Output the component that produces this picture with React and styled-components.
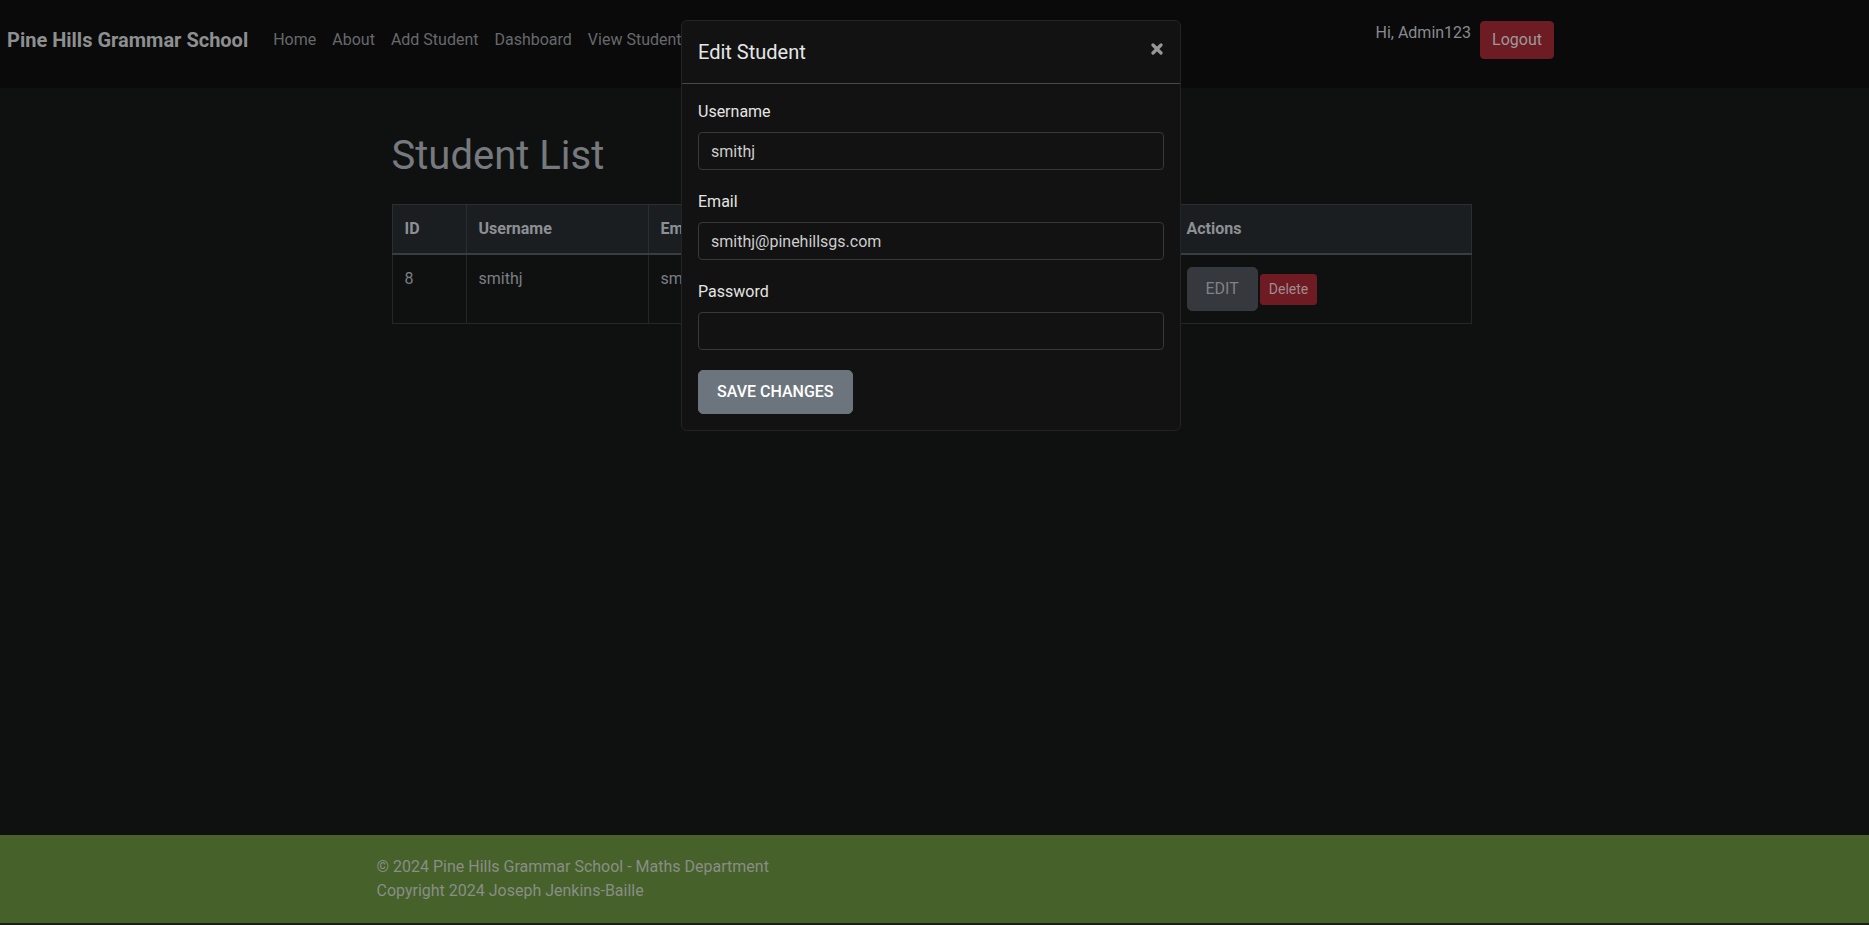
import React from "react";
import styled, { createGlobalStyle } from "styled-components";

const GlobalStyle = createGlobalStyle`
  * { box-sizing: border-box; }
  html, body { margin: 0; padding: 0; }
  body {
    font-family: Roboto, "Liberation Sans", sans-serif;
    font-size: 16px;
    line-height: 1.5;
    background: #0f1111;
    color: #7b7f83;
  }
`;

const Page = styled.div`
  min-height: 100vh;
  display: flex;
  flex-direction: column;
`;

const Navbar = styled.nav`
  height: 88px;
  background: #0a0a0a;
  display: flex;
  align-items: flex-start;
  padding: 21px 315px 0 7px;
`;

const Brand = styled.a`
  font-size: 20px;
  font-weight: 700;
  line-height: 38px;
  color: #8d8f91;
  margin-right: 17px;
  text-decoration: none;
`;

const NavLink = styled.a`
  line-height: 38px;
  padding: 0 8px;
  color: #66696c;
  text-decoration: none;
`;

const Spacer = styled.div`
  flex: 1;
`;

const Greeting = styled.span`
  line-height: 24px;
  color: #878b8f;
  margin-right: 9px;
`;

const Button = styled.button`
  font-family: inherit;
  border: 1px solid ${(p) => p.$border};
  background: ${(p) => p.$bg};
  color: ${(p) => p.$color};
  font-size: ${(p) => p.$size || 16}px;
  line-height: ${(p) => (p.$size === 14 ? 21 : 24)}px;
  padding: ${(p) => p.$pad};
  border-radius: ${(p) => p.$radius || 4}px;
  text-transform: ${(p) => (p.$upper ? "uppercase" : "none")};
  font-weight: ${(p) => p.$weight || 400};
  cursor: pointer;
`;

const DeleteButton = styled(Button)`
  vertical-align: top;
  margin: 7px 0 0 2px;
`;

const Main = styled.main`
  flex: 1;
  width: 1140px;
  margin: 0 auto;
  padding: 44px 33px 0 27px;
`;

const Title = styled.h1`
  margin: 0 0 24px;
  font-size: 40px;
  font-weight: 400;
  line-height: 48px;
  color: #76797d;
`;

const Table = styled.table`
  width: 100%;
  border-collapse: collapse;
  border: 1px solid #25282b;
`;

const Th = styled.th`
  width: ${(p) => p.$w}px;
  text-align: left;
  padding: 12px;
  font-weight: 700;
  color: #8c9094;
  background: #1b1e21;
  border: 1px solid #2b2e31;
  border-bottom: 2px solid #3a3d40;
  line-height: 24px;
`;

const Td = styled.td`
  padding: 12px;
  vertical-align: top;
  color: #7b7f83;
  border-right: 1px solid #24272a;
  line-height: 24px;
  white-space: nowrap;
`;

const Backdrop = styled.div`
  position: fixed;
  inset: 0;
  pointer-events: none;
`;

const Modal = styled.div`
  position: absolute;
  top: 20px;
  left: 681px;
  width: 500px;
  background: #121212;
  border: 1px solid #242424;
  border-radius: 6px;
  pointer-events: auto;
`;

const ModalHeader = styled.div`
  display: flex;
  align-items: center;
  justify-content: space-between;
  padding: 16px;
  border-bottom: 1px solid #474747;
`;

const ModalTitle = styled.h5`
  margin: 0;
  font-size: 20px;
  font-weight: 400;
  line-height: 30px;
  color: #e6e6e6;
`;

const Close = styled.button`
  border: 0;
  background: none;
  padding: 0;
  margin: -6px 1px 0 0;
  display: flex;
  color: #979797;
`;

const ModalBody = styled.form`
  padding: 16px;
`;

const Field = styled.div`
  margin-bottom: 20px;
`;

const Label = styled.label`
  display: block;
  margin-bottom: 8px;
  color: #e4e4e4;
  line-height: 24px;
`;

const Input = styled.input`
  display: block;
  width: 100%;
  height: 38px;
  padding: 6px 12px;
  font-family: inherit;
  font-size: 16px;
  color: #cdcdcd;
  background: #121212;
  border: 1px solid #383838;
  border-radius: 4px;
  outline: none;
`;

const Footer = styled.footer`
  background: #46612a;
  border-bottom: 2px solid #1e1e1e;
  padding: 20px 0;
`;

const FooterInner = styled.div`
  width: 1140px;
  margin: 0 auto;
  padding: 0 12px;
  color: #898e87;
  line-height: 24px;
`;

const CloseIcon = () => (
  <svg width="12" height="12" viewBox="0 0 12 12">
    <path d="M2 2 L10 10 M10 2 L2 10" stroke="currentColor" strokeWidth="3.2" strokeLinecap="round" />
  </svg>
);

const links = ["Home", "About", "Add Student", "Dashboard", "View Students"];

export default function App() {
  return (
    <>
      <GlobalStyle />
      <Page>
        <Navbar>
          <Brand href="#">Pine Hills Grammar School</Brand>
          {links.map((l) => (
            <NavLink key={l} href="#">{l}</NavLink>
          ))}
          <Spacer />
          <Greeting>Hi, Admin123</Greeting>
          <Button $bg="#6d1c24" $border="#6d1c24" $color="#9c9a9a" $pad="6px 11px">
            Logout
          </Button>
        </Navbar>

        <Main>
          <Title>Student List</Title>
          <Table>
            <thead>
              <tr>
                <Th $w={74}>ID</Th>
                <Th $w={182}>Username</Th>
                <Th $w={526}>Email</Th>
                <Th>Actions</Th>
              </tr>
            </thead>
            <tbody>
              <tr>
                <Td>8</Td>
                <Td>smithj</Td>
                <Td>smithj@pinehillsgs.com</Td>
                <Td>
                  <Button $bg="#35383c" $border="#35383c" $color="#7f8387" $pad="9px 18px" $radius={5} $upper>
                    Edit
                  </Button>
                  <DeleteButton $bg="#6e1b23" $border="#6e1b23" $color="#a08c8e" $size={14} $pad="4px 8px" $radius={3}>
                    Delete
                  </DeleteButton>
                </Td>
              </tr>
            </tbody>
          </Table>
        </Main>

        <Footer>
          <FooterInner>
            <div>© 2024 Pine Hills Grammar School - Maths Department</div>
            <div>Copyright 2024 Joseph Jenkins-Baille</div>
          </FooterInner>
        </Footer>
      </Page>

      <Backdrop>
        <Modal>
          <ModalHeader>
            <ModalTitle>Edit Student</ModalTitle>
            <Close type="button" aria-label="Close"><CloseIcon /></Close>
          </ModalHeader>
          <ModalBody onSubmit={(e) => e.preventDefault()}>
            <Field>
              <Label>Username</Label>
              <Input defaultValue="smithj" />
            </Field>
            <Field>
              <Label>Email</Label>
              <Input defaultValue="smithj@pinehillsgs.com" />
            </Field>
            <Field>
              <Label>Password</Label>
              <Input type="password" />
            </Field>
            <Button $bg="#6c757d" $border="#6c757d" $color="#ffffff" $size={16} $weight={500} $pad="9px 18px" $radius={5} $upper type="submit">
              Save Changes
            </Button>
          </ModalBody>
        </Modal>
      </Backdrop>
    </>
  );
}
